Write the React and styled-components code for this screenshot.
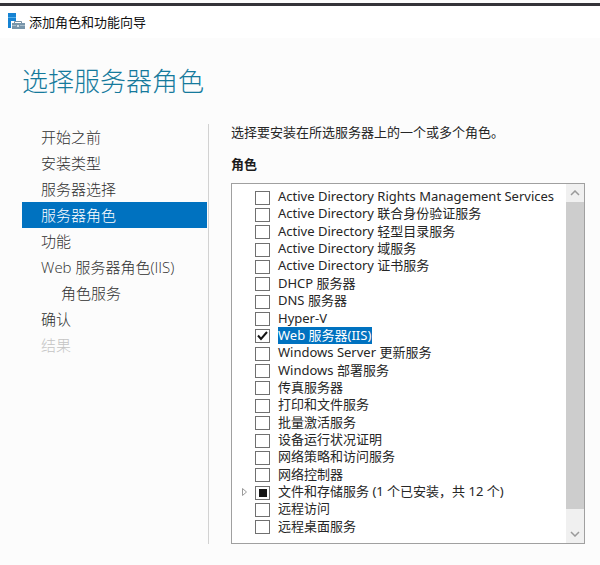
import React, { useState } from "react";
import styled, { createGlobalStyle } from "styled-components";

const GlobalStyle = createGlobalStyle`
  * { box-sizing: border-box; }
  body {
    margin: 0;
    background: #fcfcfc;
    color: #262626;
    font-family: "Noto Sans", "Noto Sans CJK SC", sans-serif;
    font-size: 13px;
  }
`;

const Window = styled.div`
  display: flex;
  flex-direction: column;
  min-height: 100vh;
  padding-top: 3px;
  background: #fcfcfc;
`;

const TitleBar = styled.header`
  display: flex;
  align-items: center;
  gap: 4px;
  height: 35px;
  padding: 0 8px 2px;
  border-top: 3px solid #343338;
  background: #ffffff;
  color: #111111;
`;

const Heading = styled.h1`
  margin: 0;
  padding: 22px 22px 24px;
  color: #157a9c;
  font-family: "Noto Sans CJK SC", sans-serif;
  font-size: 26px;
  font-weight: 300;
  line-height: 40px;
`;

const Body = styled.div`
  display: flex;
  flex: 1;
  padding: 0 15px 21px 22px;
`;

const Steps = styled.nav`
  flex: 0 0 187px;
  padding-right: 1px;
  border-right: 1px solid #d2d2d2;
`;

const Step = styled.a`
  display: block;
  padding-left: ${(p) => (p.$nested ? 39 : 19)}px;
  background: ${(p) => (p.$current ? "#0072c0" : "transparent")};
  color: ${(p) => (p.$current ? "#ffffff" : p.$disabled ? "#c4c4c4" : "#303030")};
  font-family: "Open Sans", "Noto Sans CJK SC", sans-serif;
  font-size: 15px;
  font-weight: 300;
  line-height: 26px;
  text-decoration: none;
  white-space: nowrap;
`;

const Content = styled.main`
  display: flex;
  flex: 1;
  flex-direction: column;
  min-width: 0;
  padding-left: 22px;
`;

const Description = styled.p`
  margin: 0 0 14px;
  line-height: 16px;
`;

const ListLabel = styled.h2`
  margin: 0 0 9px;
  color: #1c1c1c;
  font-size: 13px;
  font-weight: 700;
  line-height: 20px;
`;

const ListBox = styled.div`
  display: flex;
  flex: 1;
  border: 1px solid #a0a0a0;
  background: #ffffff;
`;

const RoleList = styled.ul`
  display: flex;
  flex: 1;
  flex-direction: column;
  justify-content: space-between;
  min-width: 0;
  margin: 0;
  padding: 4px 0 8px 7px;
  list-style: none;
`;

const RoleRow = styled.li`
  display: flex;
  align-items: center;
  height: 17px;
`;

const Expander = styled.button`
  display: flex;
  flex: 0 0 10px;
  align-items: center;
  justify-content: center;
  height: 16px;
  margin: 0 6px 0 0;
  padding: 0;
  border: 0;
  background: transparent;
  visibility: ${(p) => (p.$shown ? "visible" : "hidden")};
`;

const RoleLabel = styled.label`
  display: flex;
  align-items: center;
  gap: 8px;
  white-space: nowrap;
`;

const CheckWrap = styled.span`
  display: grid;
  width: 15px;
  height: 14px;
  margin-top: 2px;
  > * { grid-area: 1 / 1; }
  > svg { pointer-events: none; }
`;

const Check = styled.input`
  appearance: none;
  width: 15px;
  height: 14px;
  margin: 0;
  border: 1px solid #707070;
  background: #ffffff;
`;

const RoleName = styled.span`
  padding-right: 1px;
  background: ${(p) => (p.$selected ? "#0072c0" : "transparent")};
  color: ${(p) => (p.$selected ? "#ffffff" : "inherit")};
  line-height: 17px;
`;

const ScrollBar = styled.div`
  display: flex;
  flex: 0 0 18px;
  flex-direction: column;
  background: #f0f0f0;
`;

const ScrollButton = styled.button`
  display: flex;
  flex: 0 0 18px;
  align-items: center;
  justify-content: center;
  padding: 0;
  border: 0;
  background: #f0f0f0;
`;

const Track = styled.div`
  flex: 1;
`;

const Thumb = styled.div`
  height: 95%;
  background: #cdcdcd;
`;

const steps = [
  { text: "开始之前" },
  { text: "安装类型" },
  { text: "服务器选择" },
  { text: "服务器角色", current: true },
  { text: "功能" },
  { text: "Web 服务器角色(IIS)" },
  { text: "角色服务", nested: true },
  { text: "确认" },
  { text: "结果", disabled: true },
];

const roles = [
  "Active Directory Rights Management Services",
  "Active Directory 联合身份验证服务",
  "Active Directory 轻型目录服务",
  "Active Directory 域服务",
  "Active Directory 证书服务",
  "DHCP 服务器",
  "DNS 服务器",
  "Hyper-V",
  "Web 服务器(IIS)",
  "Windows Server 更新服务",
  "Windows 部署服务",
  "传真服务器",
  "打印和文件服务",
  "批量激活服务",
  "设备运行状况证明",
  "网络策略和访问服务",
  "网络控制器",
  "文件和存储服务 (1 个已安装，共 12 个)",
  "远程访问",
  "远程桌面服务",
];

const WEB_ROLE = 8;
const STORAGE_ROLE = 17;

function ServerIcon() {
  return (
    <svg width="17" height="17" viewBox="0 0 17 17" aria-hidden="true">
      <path d="M0 0h8v15H0z" fill="#1683d3" />
      <path d="M0 4.5h8" stroke="#58b2ec" />
      <path d="M3 8h14v9H3z" fill="#ffffff" />
      <path d="M6.5 10V8.5h7V10" fill="none" stroke="#7890a2" />
      <path d="M4 10h13v6H4z" fill="#7895aa" />
      <path d="M4 12.5h4M12 12.5h5" stroke="#a9bdca" />
      <path d="M9 12h2v2H9z" fill="#d4e0e8" />
    </svg>
  );
}

function Chevron({ down }) {
  return (
    <svg width="10" height="6" viewBox="0 0 10 6" aria-hidden="true">
      <path d={down ? "M1 1l4 4 4-4" : "M1 5l4-4 4 4"} fill="none" stroke="#9a9a9a" strokeWidth="1.5" />
    </svg>
  );
}

function Role({ name, index, checked, selected, onToggle }) {
  const partial = index === STORAGE_ROLE;
  return (
    <RoleRow>
      <Expander type="button" aria-label={`展开 ${name}`} $shown={partial}>
        <svg width="7" height="10" viewBox="0 0 7 10" aria-hidden="true">
          <path d="M1.5 1.5L5.5 5l-4 3.5z" fill="#ffffff" stroke="#9b9b9b" />
        </svg>
      </Expander>
      <RoleLabel>
        <CheckWrap>
          <Check
            type="checkbox"
            checked={checked}
            onChange={onToggle}
            ref={(el) => {
              if (el) el.indeterminate = partial;
            }}
          />
          {(checked || partial) && (
            <svg width="15" height="14" viewBox="0 0 15 14" aria-hidden="true">
              {partial ? (
                <path d="M4 3h8v8H4z" fill="#151515" />
              ) : (
                <path d="M3 6.5l3 3.5 6-7" fill="none" stroke="#151515" strokeWidth="2" />
              )}
            </svg>
          )}
        </CheckWrap>
        <RoleName $selected={selected}>{name}</RoleName>
      </RoleLabel>
    </RoleRow>
  );
}

export default function App() {
  const [checked, setChecked] = useState({ [WEB_ROLE]: true });
  const [selected, setSelected] = useState(WEB_ROLE);

  const toggle = (i) => {
    setChecked((c) => ({ ...c, [i]: !c[i] }));
    setSelected(i);
  };

  return (
    <>
      <GlobalStyle />
      <Window>
        <TitleBar>
          <ServerIcon />
          <span>添加角色和功能向导</span>
        </TitleBar>
        <Heading>选择服务器角色</Heading>
        <Body>
          <Steps>
            {steps.map((s) => (
              <Step
                key={s.text}
                href="#"
                aria-current={s.current ? "step" : undefined}
                aria-disabled={s.disabled}
                $current={s.current}
                $nested={s.nested}
                $disabled={s.disabled}
              >
                {s.text}
              </Step>
            ))}
          </Steps>
          <Content>
            <Description>选择要安装在所选服务器上的一个或多个角色。</Description>
            <ListLabel id="roles-label">角色</ListLabel>
            <ListBox>
              <RoleList aria-labelledby="roles-label">
                {roles.map((name, i) => (
                  <Role
                    key={name}
                    name={name}
                    index={i}
                    checked={!!checked[i]}
                    selected={selected === i}
                    onToggle={() => toggle(i)}
                  />
                ))}
              </RoleList>
              <ScrollBar>
                <ScrollButton type="button" aria-label="向上滚动">
                  <Chevron />
                </ScrollButton>
                <Track>
                  <Thumb />
                </Track>
                <ScrollButton type="button" aria-label="向下滚动">
                  <Chevron down />
                </ScrollButton>
              </ScrollBar>
            </ListBox>
          </Content>
        </Body>
      </Window>
    </>
  );
}
